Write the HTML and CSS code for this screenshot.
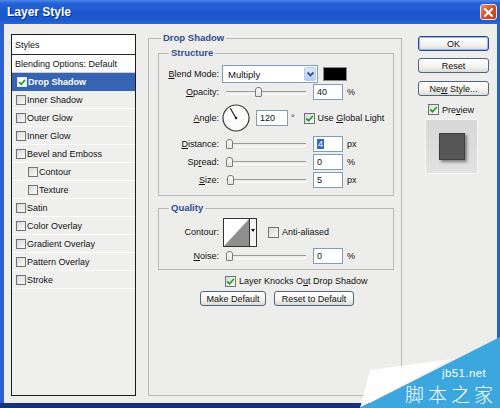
FILE: index.html
```html
<!DOCTYPE html>
<html>
<head>
<meta charset="utf-8">
<title>Layer Style</title>
<link rel="stylesheet" href="styles.css">
</head>
<body>
<div class="window">
  <div class="titlebar">
    <span class="title">Layer Style</span>
    <span class="close"><svg width="9" height="9" viewBox="0 0 9 9"><path d="M1 1L8 8M8 1L1 8" stroke="#fff" stroke-width="2" stroke-linecap="square"/></svg></span>
  </div>
  <div class="body">
    <div class="styles-list">
      <div class="li head">Styles</div>
      <div class="li blend">Blending Options: Default</div>
      <div class="li sel"><span class="cb on white"><svg width="8" height="8" viewBox="0 0 8 8"><path d="M1 4L3.2 6.3L7 1.8" stroke="#2a9d2a" stroke-width="1.8" fill="none"/></svg></span>Drop Shadow</div>
      <div class="li"><span class="cb"></span>Inner Shadow</div>
      <div class="li"><span class="cb"></span>Outer Glow</div>
      <div class="li"><span class="cb"></span>Inner Glow</div>
      <div class="li"><span class="cb"></span>Bevel and Emboss</div>
      <div class="li sub"><span class="cb"></span>Contour</div>
      <div class="li sub"><span class="cb"></span>Texture</div>
      <div class="li"><span class="cb"></span>Satin</div>
      <div class="li"><span class="cb"></span>Color Overlay</div>
      <div class="li"><span class="cb"></span>Gradient Overlay</div>
      <div class="li"><span class="cb"></span>Pattern Overlay</div>
      <div class="li"><span class="cb"></span>Stroke</div>
    </div>

    <fieldset class="panel">
      <legend>Drop Shadow</legend>
      <fieldset class="group structure">
        <legend>Structure</legend>
        <div class="row r-blend">
          <span class="lbl"><u>B</u>lend Mode:</span>
          <div class="select"><span class="sel-text">Multiply</span><span class="drop"><svg width="9" height="7" viewBox="0 0 9 7"><path d="M1.5 1.5L4.5 4.5L7.5 1.5" stroke="#3b5282" stroke-width="1.8" fill="none"/></svg></span></div>
          <span class="swatch"></span>
        </div>
        <div class="row">
          <span class="lbl"><u>O</u>pacity:</span>
          <div class="slider"><span class="thumb" style="left:29px"></span></div>
          <span class="num">40</span>
          <span class="unit">%</span>
        </div>
        <div class="row r-angle">
          <span class="lbl"><u>A</u>ngle:</span>
          <svg class="dial" width="28" height="28" viewBox="0 0 28 28"><circle cx="14" cy="14" r="13" fill="#fbfbfb" stroke="#3a3a3a" stroke-width="1.2"/><line x1="14" y1="14" x2="8.3" y2="4.3" stroke="#222" stroke-width="1.2"/><circle cx="14" cy="14" r="1.3" fill="#222"/></svg>
          <span class="num wide">120</span>
          <span class="deg">°</span>
          <span class="cb big on"><svg width="9" height="9" viewBox="0 0 9 9"><path d="M1.3 4.5L3.6 6.8L7.8 2" stroke="#2a9d2a" stroke-width="1.8" fill="none"/></svg></span>
          <span class="cb-text">Use <u>G</u>lobal Light</span>
        </div>
        <div class="row">
          <span class="lbl"><u>D</u>istance:</span>
          <div class="slider"><span class="thumb" style="left:0px"></span></div>
          <span class="num"><span class="hl">4</span></span>
          <span class="unit">px</span>
        </div>
        <div class="row">
          <span class="lbl">Sp<u>r</u>ead:</span>
          <div class="slider"><span class="thumb" style="left:0px"></span></div>
          <span class="num">0</span>
          <span class="unit">%</span>
        </div>
        <div class="row">
          <span class="lbl"><u>S</u>ize:</span>
          <div class="slider"><span class="thumb" style="left:1px"></span></div>
          <span class="num">5</span>
          <span class="unit">px</span>
        </div>
      </fieldset>

      <fieldset class="group quality">
        <legend>Quality</legend>
        <div class="row r-contour">
          <span class="lbl">Contour:</span>
          <svg class="contour" width="34" height="29" viewBox="0 0 34 29"><rect x="0.5" y="0.5" width="26" height="28" fill="#fff" stroke="#333"/><polygon points="1,28 26,1 26,28" fill="#8e8e8e"/><rect x="26.5" y="0.5" width="7" height="28" fill="#f3f3f3" stroke="#333"/><polygon points="28,11 32,11 30,14" fill="#000"/></svg>
          <span class="cb big aa"></span>
          <span class="cb-text">Anti-aliased</span>
        </div>
        <div class="row">
          <span class="lbl"><u>N</u>oise:</span>
          <div class="slider"><span class="thumb" style="left:0px"></span></div>
          <span class="num">0</span>
          <span class="unit">%</span>
        </div>
      </fieldset>

      <div class="knock">
        <span class="cb big on"><svg width="9" height="9" viewBox="0 0 9 9"><path d="M1.3 4.5L3.6 6.8L7.8 2" stroke="#2a9d2a" stroke-width="1.8" fill="none"/></svg></span>
        <span class="cb-text">Layer Knocks O<u>u</u>t Drop Shadow</span>
      </div>
      <div class="btn-row">
        <span class="btn w-make"><span>Make Default</span></span>
        <span class="btn w-reset"><span>Reset to Default</span></span>
      </div>
    </fieldset>

    <div class="side">
      <span class="btn default"><span>OK</span></span>
      <span class="btn s-reset"><span>Reset</span></span>
      <span class="btn s-new"><span>Ne<u>w</u> Style...</span></span>
      <div class="preview-row">
        <span class="cb big on"><svg width="9" height="9" viewBox="0 0 9 9"><path d="M1.3 4.5L3.6 6.8L7.8 2" stroke="#2a9d2a" stroke-width="1.8" fill="none"/></svg></span>
        <span class="cb-text">Pre<u>v</u>iew</span>
      </div>
      <div class="preview"><span class="square"></span></div>
    </div>
  </div>

  <div class="watermark">
    <svg class="wm-shape" width="160" height="78" viewBox="0 0 160 78"><polygon points="30,40 112,29 20,78" fill="#ffffff" fill-opacity="0.92"/><polygon points="160,7 160,78 20,78" fill="#3ca6df"/></svg>
    <span class="wm-net">jb51.net</span>
    <span class="wm-cn">脚本之家</span>
  </div>
</div>
</body>
</html>
```
FILE: styles.css
```css
* { box-sizing: border-box; }
html, body { margin: 0; padding: 0; }
body {
  width: 500px;
  height: 408px;
  overflow: hidden;
  font-family: "Liberation Sans", Arial, sans-serif;
  font-size: 9px;
  color: #111;
  background: #fff;
}
u { text-decoration: underline; text-underline-offset: 1px; }

.window {
  position: relative;
  width: 500px;
  height: 408px;
  display: flex;
  flex-direction: column;
  background: linear-gradient(to bottom, #2b5fcf calc(100% - 5px), #15307c calc(100% - 5px));
  overflow: hidden;
}

.titlebar {
  height: 24px;
  flex: none;
  display: flex;
  align-items: center;
  justify-content: space-between;
  padding: 0 3px 0 7px;
  background: linear-gradient(#4c88ea 0%, #2562d8 14%, #1b56cd 55%, #1d5bd1 85%, #2a66d8 100%);
}
.title {
  color: #fff;
  font-weight: bold;
  font-size: 12px;
  text-shadow: 1px 1px 0 #0c2f86;
}
.close {
  width: 17px;
  height: 16px;
  border: 1px solid #f4e4dc;
  border-radius: 3px;
  background: linear-gradient(135deg, #ea8a6c, #d5512f 50%, #c2401f);
  display: flex;
  align-items: center;
  justify-content: center;
}

.body {
  flex: 1;
  display: flex;
  align-items: stretch;
  margin: 0 3px 5px 4px;
  padding: 7px 8px 7px 7px;
  background: #ededeb;
}

/* left styles list */
.styles-list {
  width: 125px;
  flex: none;
  margin-top: 3px;
  border: 1px solid #1c1c1c;
  background: #efefee;
  display: flex;
  flex-direction: column;
}
.li {
  height: 18px;
  flex: none;
  display: flex;
  align-items: center;
  padding-left: 4px;
  border-bottom: 1px solid #fbfbfb;
  white-space: nowrap;
}
.li.head {
  height: 20px;
  padding-left: 3px;
  background: #fff;
  border-bottom: 1px solid #2a2a2a;
}
.li.blend {
  padding-left: 3px;
  background: #fdfdfd;
  border-bottom: 1px solid #cdcdcd;
}
.li.sel {
  background: #3764b2;
  color: #fff;
  font-weight: bold;
  border-bottom: none;
  padding-left: 5px;
}
.li.sub { padding-left: 16px; }

.cb {
  width: 10px;
  height: 10px;
  flex: none;
  margin-right: 1px;
  border: 1px solid #6c737c;
  background: linear-gradient(135deg, #d9d9d4, #fbfbfa);
  display: inline-flex;
  align-items: center;
  justify-content: center;
}
.cb.white { background: #fff; border-color: #dfe6f4; }
.cb.big { width: 11px; height: 11px; }
.cb-text { margin-left: 2px; white-space: nowrap; }

/* main panel */
fieldset {
  margin: 0;
  min-width: 0;
  border: 1px solid #b9b9b6;
}
legend {
  padding: 0 2px;
  font-weight: bold;
  font-size: 9.5px;
  line-height: 14px;
  color: #2f4f8f;
}
.panel {
  width: 254px;
  flex: none;
  margin-left: 12px;
  padding: 1px 7px 0 9px;
}
.panel > legend { margin-left: 3px; }
.group {
  width: 236px;
  padding: 0;
}
.group > legend { margin-left: 10px; }
.structure { padding: 5px 0 6px 0; }
.quality { margin-top: 5px; padding: 2px 0 4px 0; }

.row {
  height: 18px;
  display: flex;
  align-items: center;
}
.r-angle { height: 34px; }
.r-contour { height: 30px; }
.lbl {
  width: 60px;
  flex: none;
  text-align: right;
  white-space: nowrap;
}

.select {
  margin-left: 3px;
  width: 96px;
  height: 18px;
  border: 1px solid #7f9db9;
  background: #fff;
  display: flex;
  align-items: center;
  justify-content: space-between;
  padding: 0 1px 0 5px;
}
.sel-text { font-size: 9.5px; }
.drop {
  width: 12px;
  height: 14px;
  border: 1px solid #b7c9ef;
  border-radius: 2px;
  background: linear-gradient(#dce7fd, #b8cdf7);
  display: flex;
  align-items: center;
  justify-content: center;
}
.swatch {
  margin-left: 5px;
  width: 24px;
  height: 14px;
  background: #000;
  border: 1px solid #8a8a8a;
}

.slider {
  position: relative;
  margin-left: 7px;
  width: 80px;
  height: 12px;
  flex: none;
}
.slider::before {
  content: "";
  position: absolute;
  left: 0; right: 0;
  top: 5px;
  height: 2px;
  border-top: 1px solid #9a9a9a;
  border-bottom: 1px solid #fff;
}
.thumb {
  position: absolute;
  top: 1px;
  width: 7px;
  height: 10px;
  background: linear-gradient(#fafafa, #e2e8e2);
  border: 1px solid #7b7b7b;
  border-radius: 3px 3px 1px 1px;
}

.num {
  margin-left: 7px;
  width: 30px;
  height: 16px;
  flex: none;
  border: 1px solid #7f9db9;
  background: #fff;
  padding-left: 3px;
  display: flex;
  align-items: center;
}
.num.wide { margin-left: 6px; width: 32px; }
.hl { background: #3169c6; color: #fff; padding: 0 1px; }
.unit { margin-left: 4px; }

.dial { margin-left: 3px; flex: none; }
.deg { margin-left: 3px; }
.r-angle .cb { margin-left: 9px; }

.contour { margin-left: 4px; flex: none; }
.aa { margin-left: 11px; }

.knock {
  margin-top: 5px;
  height: 12px;
  padding-left: 67px;
  display: flex;
  align-items: center;
}
.btn-row {
  margin-top: 4px;
  padding-left: 42px;
  display: flex;
  gap: 8px;
}

.btn {
  height: 15px;
  border: 1px solid #55647d;
  border-radius: 3px;
  background: linear-gradient(#ffffff, #f3f3ef 60%, #dcdcd5);
  display: flex;
  align-items: center;
  justify-content: center;
  white-space: nowrap;
}
.w-make { width: 66px; }
.w-reset { width: 80px; }

/* right column */
.side {
  width: 71px;
  flex: none;
  margin-left: 16px;
  margin-top: 5px;
  display: flex;
  flex-direction: column;
}
.btn.default {
  border-color: #2c4683;
  box-shadow: inset 0 0 0 1px #9db7e8;
}
.s-reset { margin-top: 7px; }
.s-new { margin-top: 8px; }
.preview-row {
  margin-top: 8px;
  height: 11px;
  padding-left: 10px;
  display: flex;
  align-items: center;
}
.preview {
  margin-top: 4px;
  margin-left: 7px;
  width: 53px;
  height: 55px;
  border: 1px solid #f6f6f6;
  background: linear-gradient(#d7d7d7, #e2e2e2);
  padding: 13px 0 0 13px;
}
.square {
  display: block;
  width: 26px;
  height: 27px;
  background: #565656;
  border: 1px solid #3e3e3e;
  box-shadow: 2px 2px 3px rgba(0, 0, 0, 0.45);
}

/* watermark overlay */
.watermark {
  position: absolute;
  z-index: 2;
  right: 0;
  bottom: 0;
  width: 160px;
  height: 78px;
}
.wm-shape { position: absolute; left: 0; top: 0; }
.wm-net {
  position: absolute;
  left: 102px;
  top: 37px;
  color: #fff;
  font-family: "Liberation Sans", sans-serif;
  font-size: 11.5px;
  line-height: 13px;
  letter-spacing: 0.4px;
}
.wm-cn {
  position: absolute;
  left: 65px;
  top: 50px;
  color: #fff;
  font-family: "Noto Sans CJK SC", sans-serif;
  font-size: 19px;
  line-height: 28px;
  font-weight: 300;
  letter-spacing: 4px;
}
```
